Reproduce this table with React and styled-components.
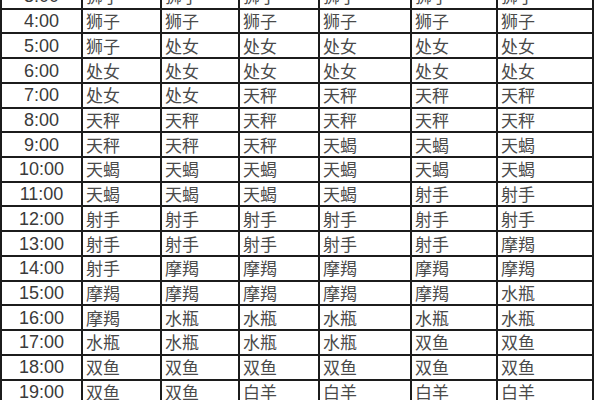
import React from "react";
import styled, { createGlobalStyle } from "styled-components";

const GlobalStyle = createGlobalStyle`
  html, body {
    margin: 0;
    padding: 0;
    background: #ffffff;
    overflow: hidden;
  }
`;

const Page = styled.div`
  width: 600px;
  height: 400px;
  overflow: hidden;
  background: #ffffff;
`;

const Table = styled.table`
  border-collapse: collapse;
  table-layout: fixed;
  width: 594px;
  margin-top: -17px;
  margin-left: 0;
`;

const Row = styled.tr`
  height: 24.73px;
`;

const TimeCell = styled.td`
  border: 2px solid #1c1c1c;
  padding: 0;
  text-align: center;
  font-family: "Liberation Sans", Arial, sans-serif;
  font-size: 18px;
  color: #3a3a3a;
  line-height: 20px;
  vertical-align: middle;
`;

const SignCell = styled.td`
  border: 2px solid #1c1c1c;
  padding: 0 0 0 3px;
  text-align: left;
  font-family: "Noto Sans CJK SC", "Noto Sans", sans-serif;
  font-size: 17px;
  color: #4a4a4a;
  line-height: 20px;
  vertical-align: middle;
  white-space: nowrap;
  overflow: hidden;
`;

const widths = [81, 79, 78, 80, 92, 86, 96];

const rows = [
  ["3:00", "狮子", "狮子", "狮子", "狮子", "狮子", "狮子"],
  ["4:00", "狮子", "狮子", "狮子", "狮子", "狮子", "狮子"],
  ["5:00", "狮子", "处女", "处女", "处女", "处女", "处女"],
  ["6:00", "处女", "处女", "处女", "处女", "处女", "处女"],
  ["7:00", "处女", "处女", "天秤", "天秤", "天秤", "天秤"],
  ["8:00", "天秤", "天秤", "天秤", "天秤", "天秤", "天秤"],
  ["9:00", "天秤", "天秤", "天秤", "天蝎", "天蝎", "天蝎"],
  ["10:00", "天蝎", "天蝎", "天蝎", "天蝎", "天蝎", "天蝎"],
  ["11:00", "天蝎", "天蝎", "天蝎", "天蝎", "射手", "射手"],
  ["12:00", "射手", "射手", "射手", "射手", "射手", "射手"],
  ["13:00", "射手", "射手", "射手", "射手", "射手", "摩羯"],
  ["14:00", "射手", "摩羯", "摩羯", "摩羯", "摩羯", "摩羯"],
  ["15:00", "摩羯", "摩羯", "摩羯", "摩羯", "摩羯", "水瓶"],
  ["16:00", "摩羯", "水瓶", "水瓶", "水瓶", "水瓶", "水瓶"],
  ["17:00", "水瓶", "水瓶", "水瓶", "水瓶", "双鱼", "双鱼"],
  ["18:00", "双鱼", "双鱼", "双鱼", "双鱼", "双鱼", "双鱼"],
  ["19:00", "双鱼", "双鱼", "白羊", "白羊", "白羊", "白羊"],
];

export default function App() {
  return (
    <Page>
      <GlobalStyle />
      <Table>
        <colgroup>
          {widths.map((w, i) => (
            <col key={i} style={{ width: w }} />
          ))}
        </colgroup>
        <tbody>
          {rows.map(([time, ...signs]) => (
            <Row key={time}>
              <TimeCell>{time}</TimeCell>
              {signs.map((s, i) => (
                <SignCell key={i}>{s}</SignCell>
              ))}
            </Row>
          ))}
        </tbody>
      </Table>
    </Page>
  );
}
